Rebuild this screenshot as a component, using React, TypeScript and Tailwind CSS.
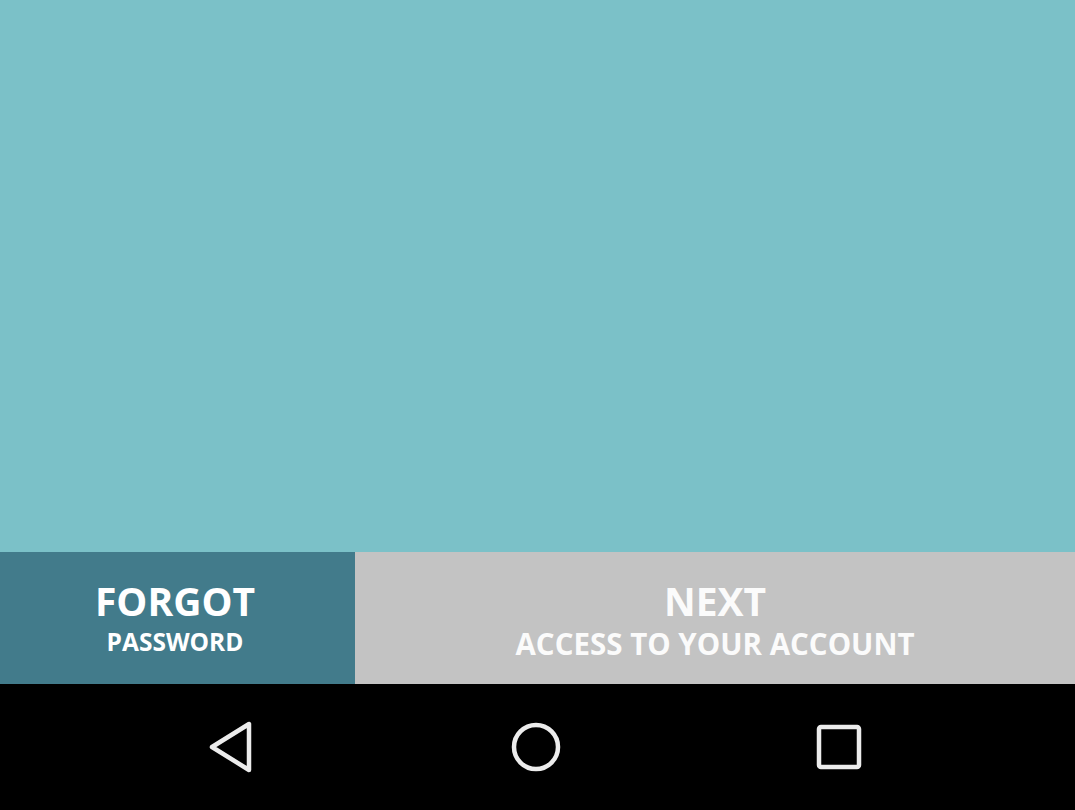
const NavBack = () => (
  <svg width="48" height="52" viewBox="0 0 48 52" fill="none">
    <path
      d="M41 3 L41 49 L4 26 Z"
      stroke="#ececec"
      strokeWidth="4.5"
      strokeLinejoin="round"
    />
  </svg>
);

const NavHome = () => (
  <svg width="52" height="52" viewBox="0 0 52 52" fill="none">
    <circle cx="26" cy="26" r="22" stroke="#ececec" strokeWidth="4.5" />
  </svg>
);

const NavRecent = () => (
  <svg width="46" height="46" viewBox="0 0 46 46" fill="none">
    <rect
      x="3"
      y="3"
      width="40"
      height="40"
      rx="2"
      stroke="#ececec"
      strokeWidth="4.5"
    />
  </svg>
);

const App = () => {
  return (
    <div
      className="w-[1075px] h-[810px] flex flex-col overflow-hidden"
      style={{ fontFamily: '"Open Sans", "Liberation Sans", sans-serif' }}
    >
      <div className="h-[552px] bg-[#7bc1c8]" />

      <div className="h-[132px] flex">
        <button className="w-[355px] h-full bg-[#427b8b] flex flex-col items-center pt-[29px] pr-[5px] text-white font-bold">
          <span className="text-[39px] leading-[40px]">FORGOT</span>
          <span className="text-[24.5px] leading-[28px] mt-[7px]">PASSWORD</span>
        </button>
        <button className="flex-1 h-full bg-[#c3c3c3] flex flex-col items-center pt-[29px] text-[#fbfbfb] font-bold">
          <span className="text-[39px] leading-[40px]">NEXT</span>
          <span className="text-[29.5px] leading-[34px] mt-[6px]">ACCESS TO YOUR ACCOUNT</span>
        </button>
      </div>

      <div className="flex-1 bg-black flex items-center">
        <div className="w-full flex items-center justify-between pl-[208px] pr-[213px]">
          <NavBack />
          <NavHome />
          <NavRecent />
        </div>
      </div>
    </div>
  );
};

export default App;
